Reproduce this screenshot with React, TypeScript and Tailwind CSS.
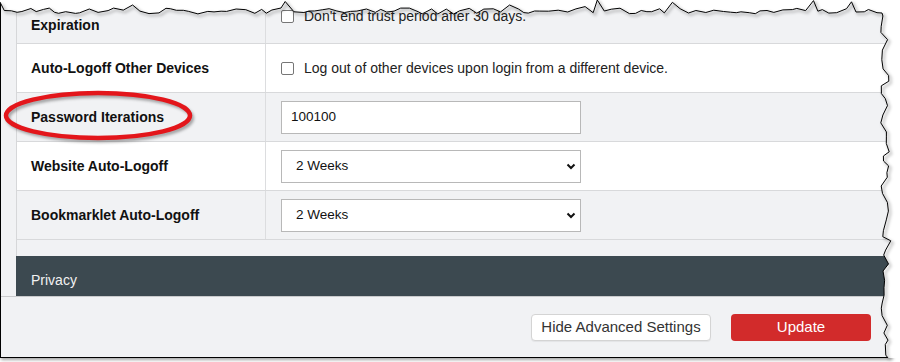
import React from 'react'

// torn-paper edge of the screenshot (top + right), deterministic jitter
let seed = 11
const rnd = () => {
  seed = (seed * 16807) % 2147483647
  return seed / 2147483647
}

const topPts: [number, number][] = []
for (let x = 0; x < 882; x += 4 + rnd() * 6) {
  const spike = rnd() < 0.07 ? -6 - rnd() * 4 : 0
  topPts.push([x, 11 + (rnd() - 0.5) * 6 + spike])
}
topPts.push([882, 13])

const rightPts: [number, number][] = []
for (let y = 16; y < 356; y += 4 + rnd() * 7) {
  const jut = rnd() < 0.12 ? (rnd() < 0.5 ? -5 : 5) : 0
  rightPts.push([885 + (rnd() - 0.5) * 9 + jut, y])
}
rightPts.push([888, 358])

const edge = [...topPts, ...rightPts]
const edgeLine = edge.map(([x, y], i) => `${i ? 'L' : 'M'}${x.toFixed(1)},${y.toFixed(1)}`).join(' ')
const whiteMask = `M0,0 L0,${topPts[0][1].toFixed(1)} ${edge
  .map(([x, y]) => `L${x.toFixed(1)},${y.toFixed(1)}`)
  .join(' ')} L900,358 L900,0 Z`

const rows = [
  { label: 'Expiration', kind: 'check', text: "Don't end trust period after 30 days.", tone: 'gray', first: true },
  { label: 'Auto-Logoff Other Devices', kind: 'check', text: 'Log out of other devices upon login from a different device.', tone: 'white' },
  { label: 'Password Iterations', kind: 'input', text: '100100', tone: 'gray' },
  { label: 'Website Auto-Logoff', kind: 'select', text: '2 Weeks', tone: 'white' },
  { label: 'Bookmarklet Auto-Logoff', kind: 'select', text: '2 Weeks', tone: 'gray' },
]

function Checkbox() {
  return <div className="w-[13px] h-[13px] shrink-0 rounded-[2px] border border-[#767676] bg-white" />
}

function Chevron() {
  return (
    <svg width="10" height="7" viewBox="0 0 10 7" className="mr-[4px]">
      <path d="M1.5 1.5 L5 5 L8.5 1.5" fill="none" stroke="#111" strokeWidth="2" />
    </svg>
  )
}

export default function App() {
  return (
    <div className="relative w-[900px] h-[362px] bg-white overflow-hidden font-['Liberation_Sans',Arial,sans-serif]">
      <div className="w-[892px] h-[358px] bg-[#f1f2f4] border-l border-b border-black flex flex-col overflow-hidden shadow-[1px_2px_3px_rgba(0,0,0,0.35)]">
        {/* settings table */}
        <div className="ml-[15px] border-l border-[#d6d7d9] flex flex-col">
          {rows.map((r) => (
            <div
              key={r.label}
              className={`flex border-b border-[#d8d9db] ${r.first ? 'h-[44px]' : 'h-[49px]'} ${
                r.tone === 'gray' ? 'bg-[#f1f2f4]' : 'bg-white'
              }`}
            >
              <div
                className={`w-[249px] shrink-0 border-r border-[#dcdddf] pl-[14px] flex text-[14px] leading-[17px] font-bold text-[#111] ${
                  r.first ? 'items-end pb-[9px]' : 'items-center'
                }`}
              >
                {r.label}
              </div>
              <div className={`flex-1 pl-[15px] flex ${r.first ? 'items-start pt-[8px]' : 'items-center'}`}>
                {r.kind === 'check' && (
                  <div className="flex items-center gap-[10px] text-[14px] leading-[17px] text-[#222]">
                    <Checkbox />
                    <span>{r.text}</span>
                  </div>
                )}
                {r.kind === 'input' && (
                  <div className="w-[300px] h-[33px] border border-[#b8b8b8] bg-white flex items-center pl-[9px] text-[13.5px] text-[#111]">
                    {r.text}
                  </div>
                )}
                {r.kind === 'select' && (
                  <div className="w-[300px] h-[33px] border border-[#b8b8b8] bg-white flex items-center justify-between pl-[14px] text-[13.5px] text-[#111]">
                    <span>{r.text}</span>
                    <Chevron />
                  </div>
                )}
              </div>
            </div>
          ))}
          <div className="h-[16px]" />
        </div>

        {/* section header */}
        <div className="ml-[15px] h-[40px] shrink-0 bg-[#3c4950] flex items-center pt-[8px] pl-[15px] text-[14px] text-[#f2f2f2]">
          Privacy
        </div>

        {/* footer */}
        <div className="flex-1 border-t border-[#c9cacc] flex justify-end items-start pt-[17px] pr-[21px] gap-[20px]">
          <button className="w-[180px] h-[27px] rounded-[4px] border border-[#d4d4d4] bg-white text-[15px] text-[#333] shadow-[0_1px_1px_rgba(0,0,0,0.06)]">
            Hide Advanced Settings
          </button>
          <button className="w-[140px] h-[27px] rounded-[4px] bg-[#d22b2b] text-[15px] text-white">Update</button>
        </div>
      </div>

      {/* torn edge + annotation */}
      <svg className="absolute inset-0 pointer-events-none" width="900" height="362" viewBox="0 0 900 362">
        <defs>
          <filter id="soft" x="-10%" y="-30%" width="120%" height="160%">
            <feGaussianBlur stdDeviation="1.5" />
          </filter>
        </defs>
        <path d={whiteMask} fill="#fff" />
        <path d={edgeLine} transform="translate(2,2)" fill="none" stroke="#000" strokeOpacity="0.25" strokeWidth="2" filter="url(#soft)" />
        <path d={edgeLine} fill="none" stroke="#000" strokeWidth="1" />
        <ellipse cx="100" cy="118" rx="92" ry="22.5" fill="none" stroke="#000" strokeOpacity="0.35" strokeWidth="4" filter="url(#soft)" />
        <ellipse cx="98" cy="115.5" rx="92" ry="22.5" fill="none" stroke="#e3161b" strokeWidth="4.5" />
      </svg>
    </div>
  )
}
